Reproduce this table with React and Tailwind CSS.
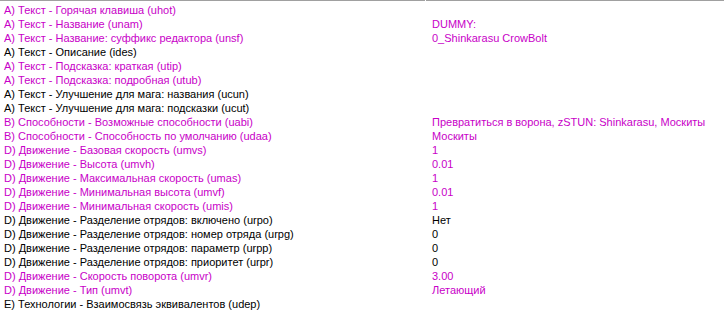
const M = 'text-[#c800c8]';
const K = 'text-black';

const rows = [
  ['A) Текст - Горячая клавиша (uhot)', '', M],
  ['A) Текст - Название (unam)', 'DUMMY:', M],
  ['A) Текст - Название: суффикс редактора (unsf)', '0_Shinkarasu CrowBolt', M],
  ['A) Текст - Описание (ides)', '', K],
  ['A) Текст - Подсказка: краткая (utip)', '', M],
  ['A) Текст - Подсказка: подробная (utub)', '', M],
  ['A) Текст - Улучшение для мага: названия (ucun)', '', K],
  ['A) Текст - Улучшение для мага: подсказки (ucut)', '', K],
  ['B) Способности - Возможные способности (uabi)', 'Превратиться в ворона, zSTUN: Shinkarasu, Москиты', M],
  ['B) Способности - Способность по умолчанию (udaa)', 'Москиты', M],
  ['D) Движение - Базовая скорость (umvs)', '1', M],
  ['D) Движение - Высота (umvh)', '0.01', M],
  ['D) Движение - Максимальная скорость (umas)', '1', M],
  ['D) Движение - Минимальная высота (umvf)', '0.01', M],
  ['D) Движение - Минимальная скорость (umis)', '1', M],
  ['D) Движение - Разделение отрядов: включено (urpo)', 'Нет', K],
  ['D) Движение - Разделение отрядов: номер отряда (urpg)', '0', K],
  ['D) Движение - Разделение отрядов: параметр (urpp)', '0', K],
  ['D) Движение - Разделение отрядов: приоритет (urpr)', '0', K],
  ['D) Движение - Скорость поворота (umvr)', '3.00', M],
  ['D) Движение - Тип (umvt)', 'Летающий', M],
  ['E) Технологии - Взаимосвязь эквивалентов (udep)', '', K],
];

export default function App() {
  return (
    <div className="w-[724px] h-[311px] overflow-hidden bg-white font-['Liberation_Sans',Arial,sans-serif] text-[11px]">
      <div className="flex gap-[1px] h-[1px]">
        <div className="w-[425px] bg-[#a0a0a0]" />
        <div className="flex-1 bg-[#a0a0a0]" />
      </div>
      <div className="pt-[2px]">
        {rows.map(([name, value, color]) => (
          <div key={name} className={`flex h-[14px] leading-[14px] whitespace-nowrap ${color}`}>
            <div className="w-[432px] pl-[4px] overflow-hidden">{name}</div>
            <div className="flex-1">{value}</div>
          </div>
        ))}
      </div>
    </div>
  );
}
